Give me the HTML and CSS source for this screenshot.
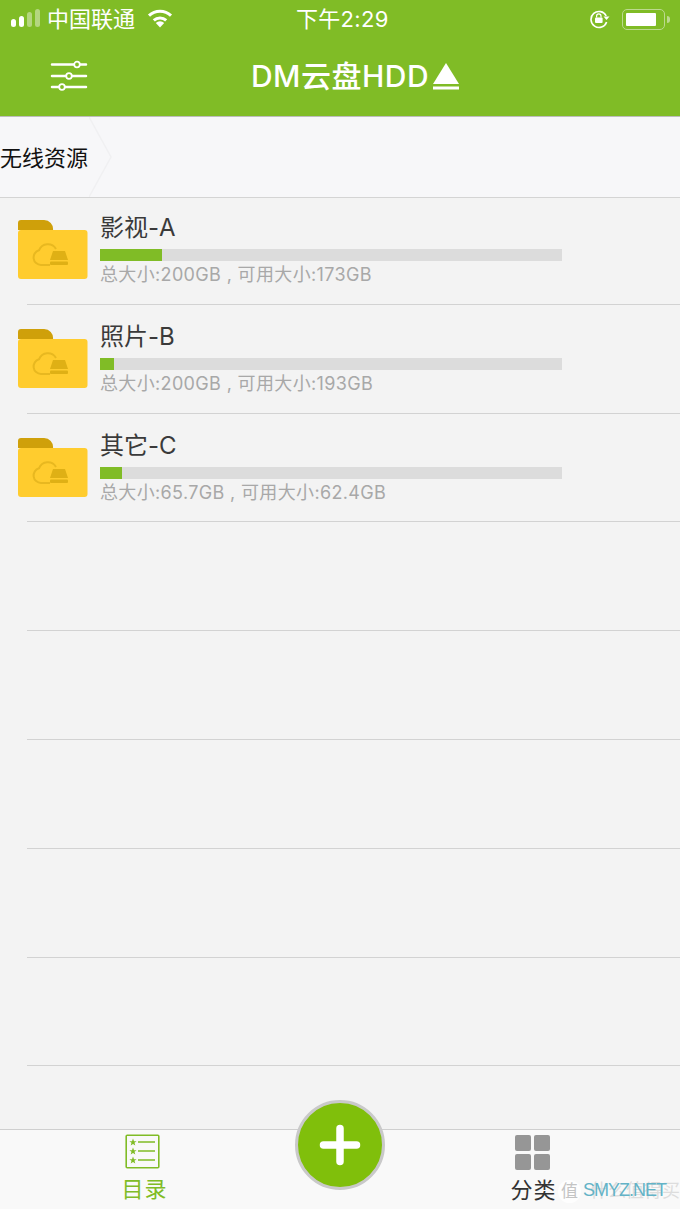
FILE: index.html
```html
<!doctype html>
<html lang="zh-CN">
  <head>
    <meta charset="UTF-8" />
    <meta name="viewport" content="width=device-width, initial-scale=1.0" />
    <title>DM云盘HDD</title>
    <link rel="stylesheet" href="styles.css">
  </head>
  <body>
    <div class="app">
      <header class="top">
        <div class="status">
          <div class="status-left">
            <div class="signal">
              <span class="dot on"></span>
              <span class="dot on tall-1"></span>
              <span class="dot tall-2"></span>
              <span class="dot tall-3"></span>
            </div>
            <span class="carrier">中国联通</span>
            <svg class="wifi" width="26" height="19" viewBox="0 0 26 19">
              <path d="M13 18.500 8.800 14a6 6 0 0 1 8.400 0z" fill="#fff" />
              <path d="M6.800 11.400a9 9 0 0 1 12.400 0" fill="none" stroke="#fff" stroke-width="3" />
              <path d="M2 6.600a16 16 0 0 1 22 0" fill="none" stroke="#fff" stroke-width="3" />
            </svg>
          </div>
          <span class="time">下午2:29</span>
          <div class="status-right">
            <svg class="lock" width="22" height="20" viewBox="0 0 22 20">
              <path d="M17.200 7A8 8 0 1 0 17.600 13" fill="none" stroke="#fff" stroke-width="1.600" />
              <path d="M14.500 7.500h6l-3 3.500z" fill="#fff" />
              <rect x="6" y="8.500" width="7.600" height="5.600" rx="1" fill="#fff" />
              <path d="M7.600 8.500V7a2.200 2.200 0 0 1 4.400 0v1.500" fill="none" stroke="#fff" stroke-width="1.200" />
            </svg>
            <div class="battery"><span class="battery-fill"></span></div>
            <span class="battery-tip"></span>
          </div>
        </div>
        <div class="navbar">
          <svg class="menu" width="38" height="32" viewBox="0 0 38 32">
            <g fill="none" stroke="#fff">
              <path d="M2 4.500h34M2 16h34M2 27h34" stroke-width="2.500" stroke-linecap="round" />
              <circle cx="27" cy="4.500" r="2.800" fill="#80bc26" stroke-width="1.800" />
              <circle cx="19" cy="16" r="2.800" fill="#80bc26" stroke-width="1.800" />
              <circle cx="12" cy="27" r="2.800" fill="#80bc26" stroke-width="1.800" />
            </g>
          </svg>
          <h1 class="title">DM云盘HDD</h1>
          <svg class="eject" width="28" height="29" viewBox="0 0 28 29">
            <path d="M14 1 27 22H1z" fill="#fff" />
            <rect x="1" y="24.500" width="26" height="3" fill="#fff" />
          </svg>
        </div>
      </header>

      <nav class="crumb">
        <span class="crumb-text">无线资源</span>
        <svg class="crumb-arrow" width="26" height="80" viewBox="0 0 26 80">
          <path d="M0 0 22 40 0 80" fill="none" stroke="#f0f0f2" stroke-width="1.500" />
        </svg>
      </nav>

      <main class="list">
        <div class="row">
          <svg class="folder" width="70" height="60" viewBox="0 0 70 60"><use href="#folder-icon" /></svg>
          <div class="info">
            <div class="name">影视-A</div>
            <div class="bar"><span class="bar-fill fill-a"></span></div>
            <div class="size">总大小:200GB , 可用大小:173GB</div>
          </div>
        </div>
        <div class="row">
          <svg class="folder" width="70" height="60" viewBox="0 0 70 60"><use href="#folder-icon" /></svg>
          <div class="info">
            <div class="name">照片-B</div>
            <div class="bar"><span class="bar-fill fill-b"></span></div>
            <div class="size">总大小:200GB , 可用大小:193GB</div>
          </div>
        </div>
        <div class="row">
          <svg class="folder" width="70" height="60" viewBox="0 0 70 60"><use href="#folder-icon" /></svg>
          <div class="info">
            <div class="name">其它-C</div>
            <div class="bar"><span class="bar-fill fill-c"></span></div>
            <div class="size">总大小:65.7GB , 可用大小:62.4GB</div>
          </div>
        </div>
        <div class="row"></div>
        <div class="row"></div>
        <div class="row"></div>
        <div class="row"></div>
        <div class="row"></div>
      </main>

      <footer class="tabs">
        <div class="tab tab-active">
          <svg width="36" height="36" viewBox="0 0 36 36">
            <rect x="1.200" y="1.200" width="32.600" height="32.600" rx="1" fill="none" stroke="#80bc26" stroke-width="1.600" />
            <path d="M13 8h17M13 17h17M13 26h17" stroke="#80bc26" stroke-width="1.600" />
            <path d="M8 4.600 9 7.200h2.600L9.500 8.800l.8 2.600L8 9.900l-2.300 1.500.8-2.600-2.100-1.600H7z" fill="#80bc26" />
            <path d="M8 13.600 9 16.200h2.600L9.500 17.800l.8 2.600L8 18.900l-2.300 1.500.8-2.600-2.100-1.600H7z" fill="#80bc26" />
            <path d="M8 22.600 9 25.200h2.600L9.500 26.800l.8 2.600L8 27.900l-2.300 1.500.8-2.600-2.100-1.600H7z" fill="#80bc26" />
          </svg>
          <span class="tab-label">目录</span>
        </div>
        <div class="tab">
          <div class="grid-icon">
            <span></span><span></span><span></span><span></span>
          </div>
          <span class="tab-label">分类</span>
        </div>
      </footer>

      <button class="fab">
        <svg width="42" height="42" viewBox="0 0 42 42">
          <path d="M21 4.500v33M4.500 21h33" stroke="#fff" stroke-width="7.500" stroke-linecap="round" />
        </svg>
      </button>

      <div class="watermark">
        <span class="mark-badge">值</span>
        <span class="mark-faint">什么值得买</span>
        <span class="mark-site">SMYZ.NET</span>
      </div>
    </div>

    <svg class="defs" width="0" height="0">
      <defs>
        <g id="folder-icon">
          <path d="M0 10V3a3 3 0 0 1 3-3h23a9 9 0 0 1 9 10z" fill="#cfa00a" />
          <rect x="0" y="10" width="69.500" height="49" rx="3" fill="#ffcc2e" />
          <path d="M32 45H23a7.500 7.500 0 0 1-2-14.700A9.500 9.500 0 0 1 38 29" fill="none" stroke="#e8b820" stroke-width="2" />
          <path d="M35 31h12l3 9H32z" fill="#dfb015" />
          <rect x="32" y="41.500" width="18" height="3.500" rx="1" fill="#dfb015" />
        </g>
      </defs>
    </svg>
  </body>
</html>
```

FILE: styles.css
```css
* {
  box-sizing: border-box;
  margin: 0;
  padding: 0;
}

body {
  font-family: Inter, "Noto Sans CJK SC", sans-serif;
  background-color: #f3f3f3;
  color: #333;
}

.app {
  position: relative;
  display: flex;
  flex-direction: column;
  width: 680px;
  height: 1209px;
  overflow: hidden;
}

.defs {
  position: absolute;
}

/* 顶部 */
.top {
  height: 117px;
  background-color: #80bc26;
  border-bottom: 1px solid #bdbdbd;
  color: #fff;
}

.status {
  display: flex;
  justify-content: space-between;
  align-items: center;
  position: relative;
  height: 38px;
  padding: 0 10px 0 11px;
}

.status-left,
.status-right {
  display: flex;
  align-items: center;
}

.status-left {
  margin-top: -4px;
}

.signal {
  display: flex;
  align-items: flex-end;
  gap: 3px;
  height: 20px;
}

.dot {
  width: 5px;
  height: 8px;
  border-radius: 2.500px;
  background-color: #b4d67f;
}

.dot.on {
  background-color: #fff;
}

.tall-1 {
  height: 11px;
}

.tall-2 {
  height: 15px;
}

.tall-3 {
  height: 18px;
}

.carrier {
  margin-left: 7px;
  font-size: 22px;
}

.wifi {
  margin-left: 12px;
  margin-top: 3px;
}

.time {
  position: absolute;
  left: 296px;
  top: 5px;
  font-size: 22px;
  line-height: 28px;
  letter-spacing: 0.300px;
}

.lock {
  margin-right: 11px;
}

.battery {
  width: 43px;
  height: 21px;
  padding: 3px;
  border: 1.500px solid #bcd98f;
  border-radius: 5px;
}

.battery-fill {
  display: block;
  width: 30px;
  height: 100%;
  background-color: #fff;
  border-radius: 1px;
}

.battery-tip {
  width: 3px;
  height: 7px;
  margin-left: 2px;
  background-color: #bcd98f;
  border-radius: 0 3px 3px 0;
}

.navbar {
  display: flex;
  justify-content: center;
  align-items: center;
  position: relative;
  height: 78px;
  padding: 0 0 2px 31px;
}

.menu {
  position: absolute;
  left: 50px;
  top: 22px;
}

.title {
  font-size: 30px;
  font-weight: 500;
  line-height: 36px;
  letter-spacing: 0.500px;
}

.eject {
  margin-left: 3px;
  margin-top: 1px;
}

/* 路径栏 */
.crumb {
  display: flex;
  align-items: center;
  height: 81px;
  background-color: #f7f7f9;
  border-bottom: 1px solid #d4d4d4;
}

.crumb-text {
  font-size: 22px;
  line-height: 28px;
  margin-top: 1px;
  color: #111;
}

.crumb-arrow {
  margin-left: 1px;
}

/* 列表 */
.list {
  flex: 1;
  margin-top: -2px;
  overflow: hidden;
}

.row {
  display: flex;
  position: relative;
  height: 108.800px;
  padding: 24px 0 0 18px;
}

.row::after {
  content: "";
  position: absolute;
  left: 27px;
  right: 0;
  bottom: 0;
  height: 1px;
  background-color: #d2d2d2;
}

.folder {
  flex-shrink: 0;
}

.info {
  width: 462px;
  margin-left: 12px;
  margin-top: -8px;
}

.name {
  font-size: 24px;
  line-height: 32px;
  color: #3a3a3a;
}

.bar {
  height: 12px;
  margin-top: 5px;
  background-color: #dcdcdc;
}

.bar-fill {
  display: block;
  height: 100%;
  background-color: #80bc26;
}

.fill-a {
  width: 62px;
}

.fill-b {
  width: 14px;
}

.fill-c {
  width: 22px;
}

.size {
  margin-top: 1px;
  font-size: 18px;
  line-height: 26px;
  letter-spacing: 0.350px;
  color: #a8a8a8;
}

/* 底部 */
.tabs {
  display: flex;
  justify-content: space-between;
  height: 80px;
  padding: 0 98px 0 93px;
  background-color: #f9f9f9;
  border-top: 1px solid #cfcfcf;
}

.tab {
  display: flex;
  flex-direction: column;
  align-items: center;
  width: 100px;
  padding-top: 4px;
  font-size: 22px;
  line-height: 28px;
  color: #333;
}

.tab-active {
  color: #80bc26;
}

.tab-label {
  margin-top: 5px;
  margin-left: 3px;
  letter-spacing: 1px;
}

.grid-icon {
  display: grid;
  grid-template-columns: 16px 16px;
  grid-auto-rows: 16px;
  gap: 3px;
  margin-bottom: 1px;
  margin-top: 1px;
}

.grid-icon span {
  background-color: #969696;
  border-radius: 2px;
}

.fab {
  display: flex;
  justify-content: center;
  align-items: center;
  position: absolute;
  left: 295px;
  top: 1100px;
  width: 90px;
  height: 90px;
  background-color: #80bf0b;
  border: 3px solid #c9c9c9;
  border-radius: 50%;
}

/* 水印 */
.watermark {
  position: absolute;
  left: 557px;
  top: 1178px;
  width: 123px;
  height: 26px;
}

.mark-badge {
  position: absolute;
  left: 1px;
  top: 2px;
  width: 23px;
  height: 23px;
  border-radius: 50%;
  background-color: rgba(255, 255, 255, 0.8);
  font-size: 17px;
  line-height: 23px;
  text-align: center;
  color: #c4c4c4;
}

.mark-faint {
  position: absolute;
  left: 33px;
  top: 1px;
  font-size: 18px;
  line-height: 24px;
  color: #ddd;
  white-space: nowrap;
}

.mark-site {
  position: absolute;
  left: 26px;
  top: 0;
  font-family: "Liberation Sans", sans-serif;
  font-size: 18px;
  line-height: 24px;
  letter-spacing: -1px;
  color: #63b3c7;
}
```
